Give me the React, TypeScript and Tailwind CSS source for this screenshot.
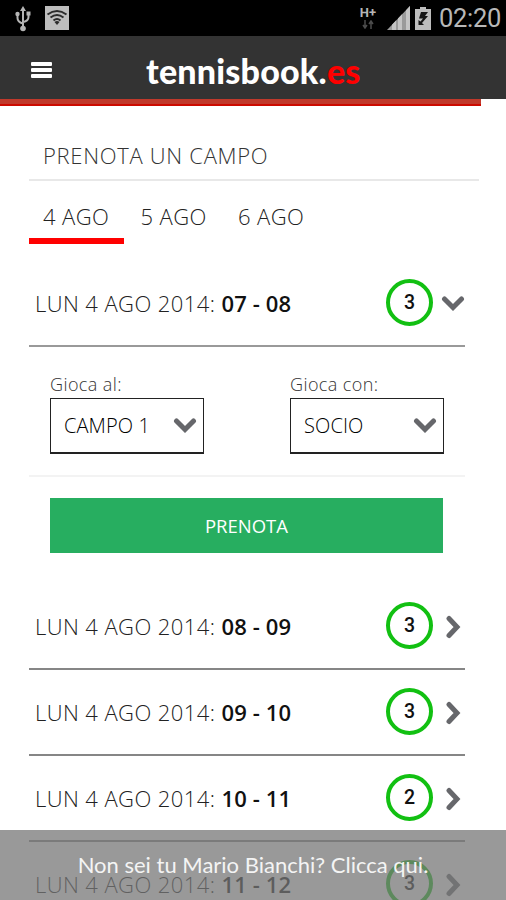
import React, { useState } from "react";

interface ISlot {
  hours: string;
  free: number;
}

const days = ["4 AGO", "5 AGO", "6 AGO"];

const slots: ISlot[] = [
  { hours: "07 - 08", free: 3 },
  { hours: "08 - 09", free: 3 },
  { hours: "09 - 10", free: 3 },
  { hours: "10 - 11", free: 2 },
  { hours: "11 - 12", free: 3 },
];

const ChevronDown = () => (
  <svg width="24" height="17" viewBox="0 0 24 17" fill="none" className="shrink-0">
    <path
      d="M3.500 4 L12 12.500 L20.500 4"
      stroke="#66676b"
      strokeWidth="5"
      strokeLinecap="round"
    />
  </svg>
);

const ChevronRight = () => (
  <svg width="17" height="24" viewBox="0 0 17 24" fill="none" className="shrink-0">
    <path
      d="M4 3.500 L12 12 L4 20.500"
      stroke="#66676b"
      strokeWidth="5"
      strokeLinecap="round"
    />
  </svg>
);

const StatusBar = () => (
  <div className="h-9 bg-black flex items-center justify-between pl-[15px] pr-[5px]">
    <div className="flex items-center gap-[14px]">
      <svg width="16" height="27" viewBox="0 0 16 27" fill="none">
        <path
          d="M8 4 V23 M2.5 9 V13 Q2.5 17 8 18.500 M13.500 9 V12 Q13.500 16 8 17"
          stroke="#b5b5b5"
          strokeWidth="2"
        />
        <path d="M8 1 L11 6 H5 Z" fill="#b5b5b5" />
        <circle cx="2.500" cy="9" r="2.200" fill="#b5b5b5" />
        <rect x="11.500" y="6.500" width="4" height="4" fill="#b5b5b5" />
        <circle cx="8" cy="23.500" r="2.800" fill="#b5b5b5" />
      </svg>
      <svg width="24" height="24" viewBox="0 0 24 24" fill="none">
        <rect width="24" height="24" fill="#bdbdbd" />
        <path
          d="M2.500 8.500 Q12 1.500 21.500 8.500 M5.500 11.500 Q12 6.500 18.500 11.500 M8.500 14.500 Q12 11.500 15.500 14.500"
          stroke="#2b2b2b"
          strokeWidth="2"
        />
        <path d="M9.500 16 Q12 14 14.500 16 L12 19 Z" fill="#2b2b2b" />
      </svg>
    </div>
    <div className="flex items-center">
      <div className="w-[18px] h-6 mr-[2px] flex flex-col items-center">
        <span className="font-['Roboto'] font-bold text-[13px] leading-[13px] text-[#b5b5b5]">
          H+
        </span>
        <svg width="12" height="9" viewBox="0 0 12 9" fill="none" className="mt-px">
          <path
            d="M3 0 V7 M1 5 L3 8 L5 5 M9 9 V1 M7 4 L9 1 L11 4"
            stroke="#4c4c4c"
            strokeWidth="1.500"
          />
        </svg>
      </div>
      <svg width="24" height="24" viewBox="0 0 24 24" className="ml-[8px]">
        <path d="M0 24 L23 0 V24 Z" fill="#9a9a9a" />
        <path
          d="M5 18.800 L9 14.600 V24 H5 Z M11 12.500 L15 8.300 V24 H11 Z M19 4.200 L23 0 V24 H19 Z"
          fill="#c4c4c4"
        />
      </svg>
      <svg width="16" height="23" viewBox="0 0 16 23" className="ml-[4px] mr-px">
        <path d="M0 2 H5 V0 H11 V2 H16 V23 H0 Z" fill="#bdbdbd" />
        <path d="M6 5 H13 L10 9 H13 L7 16 L9 18 H3.500 V13 L5.500 14.500 L8 11.500 H4 Z" fill="#161616" />
      </svg>
      <span className="ml-[7px] w-[62px] font-['Roboto'] text-[25.500px] leading-9 tracking-[-0.3px] text-[#b8b8b8] whitespace-nowrap">
        02:20
      </span>
    </div>
  </div>
);

const SlotRow = ({ slot, open, onClick }: { slot: ISlot; open: boolean; onClick: () => void }) => (
  <div
    onClick={onClick}
    className={`h-[86px] shrink-0 pl-[6px] flex items-center justify-between border-b-2 cursor-pointer ${
      open ? "border-[#999999]" : "border-[#868686]"
    }`}
  >
    <p className="text-[22px] leading-8 font-light tracking-[0.42px] text-[#222222] whitespace-nowrap">
      LUN 4 AGO 2014:{" "}
      <span className="font-semibold tracking-[0.1px] text-[#111111]">{slot.hours}</span>
    </p>
    <div className="flex items-center mb-[2px]">
      <div className="size-[47px] pt-px rounded-full border-4 border-[#12c012] flex items-center justify-center font-['Roboto'] font-medium text-[19.5px] text-[#111111]">
        {slot.free}
      </div>
      <div className="w-8 pt-[3px] flex justify-end">
        {open ? (
          <ChevronDown />
        ) : (
          <div className="pr-[3px]">
            <ChevronRight />
          </div>
        )}
      </div>
    </div>
  </div>
);

const Field = ({ label, value }: { label: string; value: string }) => (
  <div className="w-[154px]">
    <p className="text-[18px] leading-6 font-light tracking-[0.4px] text-[#333333] whitespace-nowrap">
      {label}
    </p>
    <div className="mt-[2px] h-14 border border-b-2 border-[#222222] pl-[13px] pr-[6px] flex items-center justify-between">
      <span className="text-[20px] font-light tracking-[0.1px] text-black whitespace-nowrap">
        {value}
      </span>
      <ChevronDown />
    </div>
  </div>
);

const App = () => {
  const [activeDay, setActiveDay] = useState(0);
  const [openSlot, setOpenSlot] = useState(0);

  return (
    <main className="relative w-[506px] h-[900px] overflow-hidden bg-white font-['Open_Sans',sans-serif]">
      <StatusBar />

      {/* Header */}
      <header className="h-[63px] bg-[#333333] flex items-center">
        <button className="ml-[31px] mt-[4px] w-[21px] flex flex-col gap-[2px]">
          <span className="h-1 bg-white rounded-[1px]" />
          <span className="h-1 bg-white rounded-[1px]" />
          <span className="h-1 bg-white rounded-[1px]" />
        </button>
        <h1 className="ml-[94px] mt-[6px] font-['Lato'] font-black text-[34px] leading-10 tracking-[0.2px] text-white whitespace-nowrap">
          tennisbook.<span className="text-[#ff0000]">es</span>
        </h1>
      </header>
      <div className="h-[7px] w-[481px] bg-[#c0392b] border-b-2 border-[#cc0a00]" />

      <section className="pl-[29px]">
        <h2 className="mt-[34px] h-[41px] w-[450px] pl-[14px] border-b-2 border-[#e8e8e8] text-[22px] leading-[30px] font-light tracking-[0.7px] text-[#333333]">
          PRENOTA UN CAMPO
        </h2>

        {/* Day tabs */}
        <nav className="mt-5 h-[43px] flex gap-[2.500px]">
          {days.map((day, idx) => (
            <button
              key={day}
              onClick={() => setActiveDay(idx)}
              className={`w-[95px] h-[43px] pl-[14px] flex items-start text-[22px] leading-[30px] font-light tracking-[0.4px] text-[#222222] whitespace-nowrap border-b-[6px] ${
                activeDay === idx ? "border-[#ff0000]" : "border-transparent"
              }`}
            >
              {day}
            </button>
          ))}
        </nav>

        {/* Slots */}
        <div className="mt-[17px] w-[436px] flex flex-col">
          {slots.map((slot, idx) => (
            <React.Fragment key={slot.hours}>
              <SlotRow slot={slot} open={openSlot === idx} onClick={() => setOpenSlot(idx)} />
              {openSlot === idx && (
                <div className="h-[237px] shrink-0">
                  <div className="h-[130px] pt-[25px] pl-[21px] pr-[21px] flex justify-between border-b-2 border-[#f3f3f3]">
                    <Field label="Gioca al:" value="CAMPO 1" />
                    <Field label="Gioca con:" value="SOCIO" />
                  </div>
                  <button className="mt-[21px] ml-[21px] w-[393px] h-[55px] bg-[#27ae60] text-white text-[18.500px]">
                    PRENOTA
                  </button>
                </div>
              )}
            </React.Fragment>
          ))}
        </div>
      </section>

      {/* Account notice, stays over the list */}
      <footer className="absolute inset-x-0 bottom-0 h-[70px] pb-[2px] bg-[#777777]/75 flex items-center justify-center">
        <p className="font-['Lato'] text-[22px] text-[#f4f4f4] whitespace-nowrap">
          Non sei tu Mario Bianchi? Clicca qui.
        </p>
      </footer>
    </main>
  );
};

export default App;
